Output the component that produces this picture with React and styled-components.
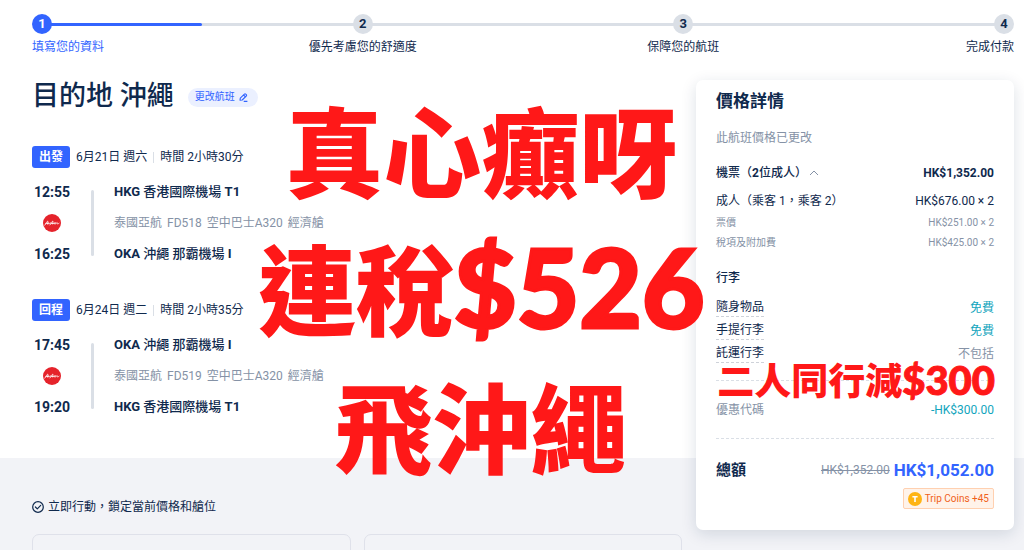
import React from "react";
import styled, { createGlobalStyle, css } from "styled-components";

const navy = "#0f294d";
const grey = "#8592a6";
const blue = "#3264ff";
const teal = "#12a5bd";
const red = "#ff1818";

const GlobalStyle = createGlobalStyle`
  * { box-sizing: border-box; }
  body {
    margin: 0;
    background: #fff;
    color: ${navy};
    font-family: Roboto, "Noto Sans CJK TC", sans-serif;
    font-size: 12px;
    line-height: 20px;
  }
  h1, h2, h3, p, ol, ul { margin: 0; padding: 0; }
  ol, ul { list-style: none; }
  button { margin: 0; padding: 0; border: 0; background: none; color: inherit; font: inherit; cursor: pointer; }
`;

const Page = styled.div`
  position: relative;
  display: flex;
  flex-direction: column;
  height: 100vh;
  overflow: hidden;
`;

const Steps = styled.ol`
  position: relative;
  display: flex;
  justify-content: space-between;
  margin: 14px 10px 0 32px;
`;

const Track = styled.li`
  position: absolute;
  top: 9px;
  left: 10px;
  right: 10px;
  height: 3px;
  background: #dadfe6;

  &::before {
    content: "";
    display: block;
    width: calc(100% / 6);
    height: 3px;
    border-radius: 0 2px 2px 0;
    background: ${blue};
  }
`;

const Step = styled.li`
  position: relative;
  display: flex;
  flex-direction: column;
  align-items: ${(p) => p.$align || "center"};
  gap: 3px;
  width: 20px;
  white-space: nowrap;
  color: ${(p) => (p.$active ? blue : navy)};
`;

const StepNumber = styled.span`
  width: 20px;
  height: 20px;
  border-radius: 50%;
  background: ${(p) => (p.$active ? blue : "#dadfe6")};
  color: ${(p) => (p.$active ? "#fff" : navy)};
  font-size: 13px;
  font-weight: 700;
  text-align: center;
`;

const Layout = styled.main`
  flex: 1;
  display: grid;
  grid-template-columns: minmax(0, 1fr) 328px;
  grid-template-rows: auto 1fr;
`;

const Trip = styled.section`
  grid-area: 1 / 1;
  padding: 23px 0 40px 32px;
`;

const TitleRow = styled.div`
  display: flex;
  align-items: center;
  gap: 14px;
  height: 32px;
  margin-bottom: 34px;
`;

const Title = styled.h1`
  font-size: 27px;
  line-height: 32px;
  font-weight: 500;
`;

const ChangeButton = styled.button`
  display: flex;
  align-items: center;
  gap: 4px;
  height: 19px;
  padding: 0 10px 0 7px;
  margin-top: 2px;
  border-radius: 10px;
  background: #ebf0ff;
  color: ${blue};
  font-size: 10px;
`;

const Flight = styled.article`
  & + & { margin-top: 34px; }
`;

const FlightHead = styled.div`
  display: flex;
  align-items: center;
  gap: 6px;
  margin-bottom: 13px;
`;

const Badge = styled.span`
  padding: 0 7px;
  border-radius: 3px;
  background: ${blue};
  color: #fff;
  line-height: 22px;
  font-weight: 700;
`;

const Divider = styled.span`
  width: 1px;
  height: 11px;
  background: #dadfe6;
`;

const Itinerary = styled.div`
  display: grid;
  grid-template-columns: 40px 40px 1fr;
  grid-template-rows: 22px 40px 22px;
  align-items: center;
`;

const Time = styled.time`
  grid-column: 1;
  font-size: 14px;
  font-weight: 700;
  text-align: center;
`;

const Bar = styled.span`
  grid-area: 1 / 2 / 4 / 3;
  justify-self: center;
  width: 3px;
  height: 66px;
  border-radius: 2px;
  background: #dadfe6;
`;

const Airport = styled.p`
  grid-column: 3;
  padding-left: 2px;
  font-size: 13px;
  font-weight: 500;

  b { font-weight: 700; }
`;

const Carrier = styled.p`
  grid-column: 3;
  display: flex;
  gap: 5px;
  padding-left: 2px;
  color: ${grey};
`;

const Logo = styled.svg`
  grid-column: 1;
  justify-self: center;
`;

const Extras = styled.section`
  grid-area: 2 / 1 / 3 / 3;
  padding: 39px 342px 0 32px;
  background: #f2f3f7;
`;

const Notice = styled.p`
  display: flex;
  align-items: center;
  gap: 4px;
`;

const Offers = styled.div`
  display: grid;
  grid-template-columns: 1fr 1fr;
  gap: 13px;
  margin-top: 17px;
`;

const Offer = styled.div`
  height: 80px;
  border: 1px solid #dfe1ea;
  border-radius: 7px;
`;

const PriceCard = styled.aside`
  grid-area: 1 / 2 / 3 / 3;
  align-self: start;
  position: relative;
  margin: 23px 10px 0 0;
  padding: 9px 20px 21px;
  border-radius: 7px;
  background: #fff;
  box-shadow: 0 4px 16px rgba(15, 41, 77, 0.14);
`;

const CardTitle = styled.h2`
  font-size: 17px;
  line-height: 24px;
  font-weight: 700;
`;

const Muted = styled.p`
  margin: 15px 0;
  color: ${grey};
`;

const Row = styled.div`
  display: flex;
  align-items: center;
  justify-content: space-between;
`;

const FareRow = styled(Row)`
  margin: 8px 0 2px;
`;

const DetailRow = styled(Row)`
  color: ${grey};
  font-size: 10px;
`;

const Toggle = styled.button`
  display: flex;
  align-items: center;
  gap: 2px;
  font-weight: 500;

  b { font-weight: 700; }
`;

const Subtitle = styled.h3`
  margin: 15px 0 8px;
  font-size: 12px;
  font-weight: 500;
`;

const BagRow = styled(Row)`
  height: 23px;
`;

const BagButton = styled.button`
  height: 18px;
  line-height: 17px;
  border-bottom: 1px dashed #ced2d9;
`;

const Amount = styled.span`
  color: ${(p) => (p.$muted ? grey : teal)};
`;

const Rule = styled.div`
  margin: ${(p) => p.$gap} 0 19px;
  border-top: 1px dashed #dadfe6;
`;

const Total = styled.div`
  display: flex;
  align-items: center;
  gap: 4px;
  line-height: 24px;
`;

const TotalLabel = styled.h3`
  margin-right: auto;
  font-size: 15px;
  font-weight: 700;
`;

const OldPrice = styled.s`
  color: ${grey};
`;

const NewPrice = styled.strong`
  color: ${blue};
  font-size: 17px;
`;

const Coins = styled.div`
  display: flex;
  align-items: center;
  gap: 3px;
  width: max-content;
  height: 21px;
  margin: 6px 0 0 auto;
  padding: 0 4px;
  border: 1px solid #ffd0b0;
  border-radius: 2px;
  background: #fff3ea;
  color: #f0611a;
  font-size: 10px;
`;

const overlayText = css`
  position: absolute;
  color: ${red};
  font-family: "Noto Sans CJK TC", sans-serif;
  font-weight: 900;
  white-space: nowrap;
  pointer-events: none;
`;

const Headline = styled.div`
  ${overlayText}
  top: 78px;
  left: 0;
  width: 94%;
  font-size: 98px;
  line-height: 138px;
  text-align: center;
`;

const Figure = styled.span`
  font-family: Lato, sans-serif;
  font-size: ${(p) => p.$size};
  line-height: 1;
  -webkit-text-stroke: ${(p) => p.$stroke} ${red};
`;

const Saving = styled.p`
  ${overlayText}
  top: 279px;
  right: 19px;
  font-size: 37px;
  line-height: 40px;
`;

const steps = [
  { label: "填寫您的資料", align: "flex-start", active: true },
  { label: "優先考慮您的舒適度" },
  { label: "保障您的航班" },
  { label: "完成付款", align: "flex-end" },
];

const hkg = { code: "HKG", name: "香港國際機場", terminal: "T1" };
const oka = { code: "OKA", name: "沖繩 那霸機場", terminal: "I" };

const flights = [
  { kind: "出發", date: "6月21日 週六", time: "時間 2小時30分", start: "12:55", end: "16:25", from: hkg, to: oka, no: "FD518" },
  { kind: "回程", date: "6月24日 週二", time: "時間 2小時35分", start: "17:45", end: "19:20", from: oka, to: hkg, no: "FD519" },
];

const bags = [
  { name: "隨身物品", value: "免費" },
  { name: "手提行李", value: "免費" },
  { name: "託運行李", value: "不包括", muted: true },
];

function AirlineLogo() {
  return (
    <Logo width="18" height="18" viewBox="0 0 18 18" role="img" aria-label="AirAsia">
      <circle cx="9" cy="9" r="9" fill="#e5232b" />
      <path
        d="M1.8 11.2C3.2 9.5 4 7.2 4.7 7.1C5.2 7.1 4.2 10.2 4.5 10.3C4.9 10.3 5.3 8.5 5.6 8.6C5.8 8.8 5.5 10.2 5.9 10.1C6.4 10 6.4 8.6 7.2 8.7M6.9 11C8.4 9.7 9 7.2 9.8 7.1C10.3 7.2 9.2 10.2 9.7 10.2C10.5 10.1 10.3 8.8 11.1 8.6C11.6 8.8 10.6 10.2 11.2 10.1C11.8 10 12 8.6 12.4 8.6C12.5 8.8 12.1 10.1 12.6 10C13.3 9.9 13.4 8.6 14.2 8.6C14.7 8.7 14 10.2 14.7 10C15.2 9.9 15.5 9.5 16 9.2M2.8 9.4H5M7.8 9.4H10"
        fill="none"
        stroke="#fff"
        strokeWidth="0.8"
        strokeLinecap="round"
      />
    </Logo>
  );
}

function AirportLine({ airport }) {
  return (
    <Airport>
      <b>{airport.code}</b> {airport.name} <b>{airport.terminal}</b>
    </Airport>
  );
}

function FlightBlock({ flight }) {
  return (
    <Flight>
      <FlightHead>
        <Badge>{flight.kind}</Badge>
        <span>{flight.date}</span>
        <Divider />
        <span>{flight.time}</span>
      </FlightHead>
      <Itinerary>
        <Bar />
        <Time>{flight.start}</Time>
        <AirportLine airport={flight.from} />
        <AirlineLogo />
        <Carrier>
          <span>泰國亞航</span>
          <span>{flight.no}</span>
          <span>空中巴士A320</span>
          <span>經濟艙</span>
        </Carrier>
        <Time>{flight.end}</Time>
        <AirportLine airport={flight.to} />
      </Itinerary>
    </Flight>
  );
}

export default function App() {
  return (
    <Page>
      <GlobalStyle />
      <Steps>
        <Track aria-hidden="true" />
        {steps.map((s, i) => (
          <Step key={s.label} $align={s.align} $active={s.active}>
            <StepNumber $active={s.active}>{i + 1}</StepNumber>
            {s.label}
          </Step>
        ))}
      </Steps>
      <Layout>
        <Trip>
          <TitleRow>
            <Title>目的地 沖繩</Title>
            <ChangeButton type="button">
              更改航班
              <svg width="9" height="9" viewBox="0 0 9 9" fill="none" stroke="currentColor" strokeWidth="1.1" strokeLinejoin="round">
                <path d="M1 7.3L1.3 5.2L5.4 1.1Q6 .5 6.7 1.1L7.3 1.7Q7.9 2.3 7.3 3L3.2 7Z M4.6 2L6.4 3.8M4.7 8.4H8.4" />
              </svg>
            </ChangeButton>
          </TitleRow>
          {flights.map((f) => (
            <FlightBlock key={f.no} flight={f} />
          ))}
        </Trip>
        <Extras>
          <Notice>
            <svg width="12" height="12" viewBox="0 0 12 12" fill="none" stroke="currentColor" strokeWidth="1.2" strokeLinecap="round" strokeLinejoin="round">
              <circle cx="6" cy="6" r="5.3" />
              <path d="M3.4 6L5.3 7.9L8.7 4.4" />
            </svg>
            立即行動，鎖定當前價格和艙位
          </Notice>
          <Offers>
            <Offer />
            <Offer />
          </Offers>
        </Extras>
        <PriceCard>
          <CardTitle>價格詳情</CardTitle>
          <Muted>此航班價格已更改</Muted>
          <Row>
            <Toggle type="button" aria-expanded="true">
              <span>機票（<b>2</b>位成人）</span>
              <svg width="10" height="6" viewBox="0 0 10 6" fill="none" stroke={grey} strokeWidth="1">
                <path d="M1 5L5 1L9 5" />
              </svg>
            </Toggle>
            <strong>HK$1,352.00</strong>
          </Row>
          <FareRow>
            <span>成人（乘客 1，乘客 2）</span>
            <span>HK$676.00 × 2</span>
          </FareRow>
          <DetailRow>
            <span>票價</span>
            <span>HK$251.00 × 2</span>
          </DetailRow>
          <DetailRow>
            <span>稅項及附加費</span>
            <span>HK$425.00 × 2</span>
          </DetailRow>
          <Subtitle>行李</Subtitle>
          {bags.map((b) => (
            <BagRow key={b.name}>
              <BagButton type="button">{b.name}</BagButton>
              <Amount $muted={b.muted}>{b.value}</Amount>
            </BagRow>
          ))}
          <Rule $gap="15px" />
          <Row>
            <Amount $muted>優惠代碼</Amount>
            <Amount>-HK$300.00</Amount>
          </Row>
          <Rule $gap="18px" />
          <Total>
            <TotalLabel>總額</TotalLabel>
            <OldPrice>HK$1,352.00</OldPrice>
            <NewPrice>HK$1,052.00</NewPrice>
          </Total>
          <Coins>
            <svg width="14" height="14" viewBox="0 0 14 14">
              <circle cx="7" cy="7" r="7" fill="#ffb414" />
              <path d="M4.4 4.8H9.6M7 4.8V10" stroke="#fff" strokeWidth="1.6" />
            </svg>
            Trip Coins +45
          </Coins>
          <Saving>
            二人同行減<Figure $size="40px" $stroke="1px">$300</Figure>
          </Saving>
        </PriceCard>
      </Layout>
      <Headline>
        <div>真心癲呀</div>
        <div>連稅<Figure $size="108px" $stroke="3px">$526</Figure></div>
        <div>飛沖繩</div>
      </Headline>
    </Page>
  );
}
